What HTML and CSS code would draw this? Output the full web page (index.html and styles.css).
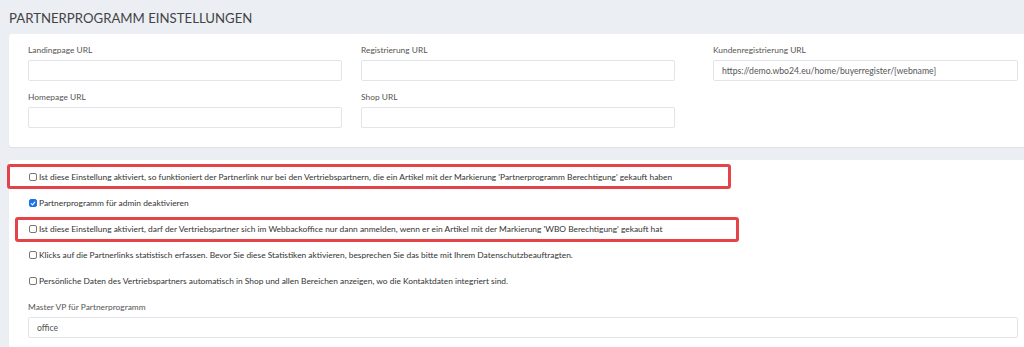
FILE: index.html
```html
<!DOCTYPE html>
<html lang="de">
<head>
    <meta charset="UTF-8">
    <meta name="viewport" content="width=device-width, initial-scale=1.0">
    <title>Partnerprogramm Einstellungen</title>
    <link rel="stylesheet" href="styles.css">
</head>
<body>
    <div class="page">
        <h1 class="page-title">PARTNERPROGRAMM EINSTELLUNGEN</h1>

        <!-- URL settings -->
        <div class="card url-card">
            <div class="url-grid">
                <div class="field">
                    <label>Landingpage URL</label>
                    <input type="text" value="">
                </div>
                <div class="field">
                    <label>Registrierung URL</label>
                    <input type="text" value="">
                </div>
                <div class="field field-wide">
                    <label>Kundenregistrierung URL</label>
                    <input type="text" value="https://demo.wbo24.eu/home/buyerregister/[webname]">
                </div>
                <div class="field">
                    <label>Homepage URL</label>
                    <input type="text" value="">
                </div>
                <div class="field">
                    <label>Shop URL</label>
                    <input type="text" value="">
                </div>
            </div>
        </div>

        <!-- Options -->
        <div class="card options-card">
            <div class="highlight highlight-one"></div>
            <div class="highlight highlight-two"></div>

            <div class="check-row"><span class="box"></span>Ist diese Einstellung aktiviert, so funktioniert der Partnerlink nur bei den Vertriebspartnern, die ein Artikel mit der Markierung 'Partnerprogramm Berechtigung' gekauft haben</div>
            <div class="check-row"><span class="box checked"><svg viewBox="0 0 10 10" width="7" height="7"><path d="M2 5.2 L4.2 7.3 L8 2.8" fill="none" stroke="#fff" stroke-width="1.8" stroke-linecap="round" stroke-linejoin="round"/></svg></span>Partnerprogramm für admin deaktivieren</div>
            <div class="check-row"><span class="box"></span>Ist diese Einstellung aktiviert, darf der Vertriebspartner sich im Webbackoffice nur dann anmelden, wenn er ein Artikel mit der Markierung 'WBO Berechtigung' gekauft hat</div>
            <div class="check-row"><span class="box"></span>Klicks auf die Partnerlinks statistisch erfassen. Bevor Sie diese Statistiken aktivieren, besprechen Sie das bitte mit Ihrem Datenschutzbeauftragten.</div>
            <div class="check-row"><span class="box"></span>Persönliche Daten des Vertriebspartners automatisch in Shop und allen Bereichen anzeigen, wo die Kontaktdaten integriert sind.</div>

            <div class="field">
                <label>Master VP für Partnerprogramm</label>
                <input type="text" value="office">
            </div>
        </div>
    </div>
</body>
</html>
```

FILE: styles.css
```css
/* Page layout */
body {
    margin: 0;
    padding: 0;
    background-color: #ebeef3;
    font-family: Lato, "Liberation Sans", sans-serif;
    color: #333;
    overflow: hidden;
}

.page {
    padding: 8px 0 0 9px;
}

.page-title {
    margin: 0 0 6px 0;
    font-size: 13.2px;
    line-height: 20px;
    font-weight: 400;
    color: #444;
}

/* Cards */
.card {
    background-color: #fff;
    border-radius: 3px 0 0 3px;
    box-shadow: 0 1px 1px rgba(0, 0, 0, 0.06);
}

.url-card {
    padding: 9px 6px 19px 19px;
    margin-bottom: 13px;
}

.options-card {
    position: relative;
    padding: 10px 6px 10px 19px;
}

/* Form fields */
.url-grid {
    display: grid;
    grid-template-columns: 314px 314px 1fr;
    column-gap: 19px;
    row-gap: 9px;
}

.field-wide {
    grid-row: span 2;
    margin-left: 19px;
}

.field label {
    display: block;
    font-size: 8.4px;
    line-height: 14px;
    color: #555;
    margin-bottom: 3px;
}

.field input {
    display: block;
    box-sizing: border-box;
    width: 100%;
    height: 21px;
    margin: 0;
    padding: 0 8px;
    border: 1px solid #e1e4ea;
    border-radius: 2px;
    font-family: inherit;
    font-size: 8.7px;
    color: #555;
    background: #fff;
    outline: none;
}

/* Checkbox rows */
.check-row {
    display: flex;
    align-items: center;
    font-size: 8.4px;
    line-height: 14px;
    color: #333;
    margin-bottom: 12px;
    white-space: nowrap;
}

.box {
    display: inline-flex;
    align-items: center;
    justify-content: center;
    box-sizing: border-box;
    width: 8px;
    height: 8px;
    margin-left: 1px;
    margin-right: 2px;
    border: 1px solid #777;
    border-radius: 2px;
    background: #fff;
    flex-shrink: 0;
}

.box.checked {
    background: #1a73e8;
    border-color: #1a73e8;
}

/* Red annotation frames */
.highlight {
    position: absolute;
    width: 724px;
    height: 25px;
    box-sizing: border-box;
    border: 3px solid #e5434a;
    border-radius: 3px;
}

.highlight-one {
    left: -2px;
    top: 4px;
}

.highlight-two {
    left: 6px;
    top: 57px;
}
```
